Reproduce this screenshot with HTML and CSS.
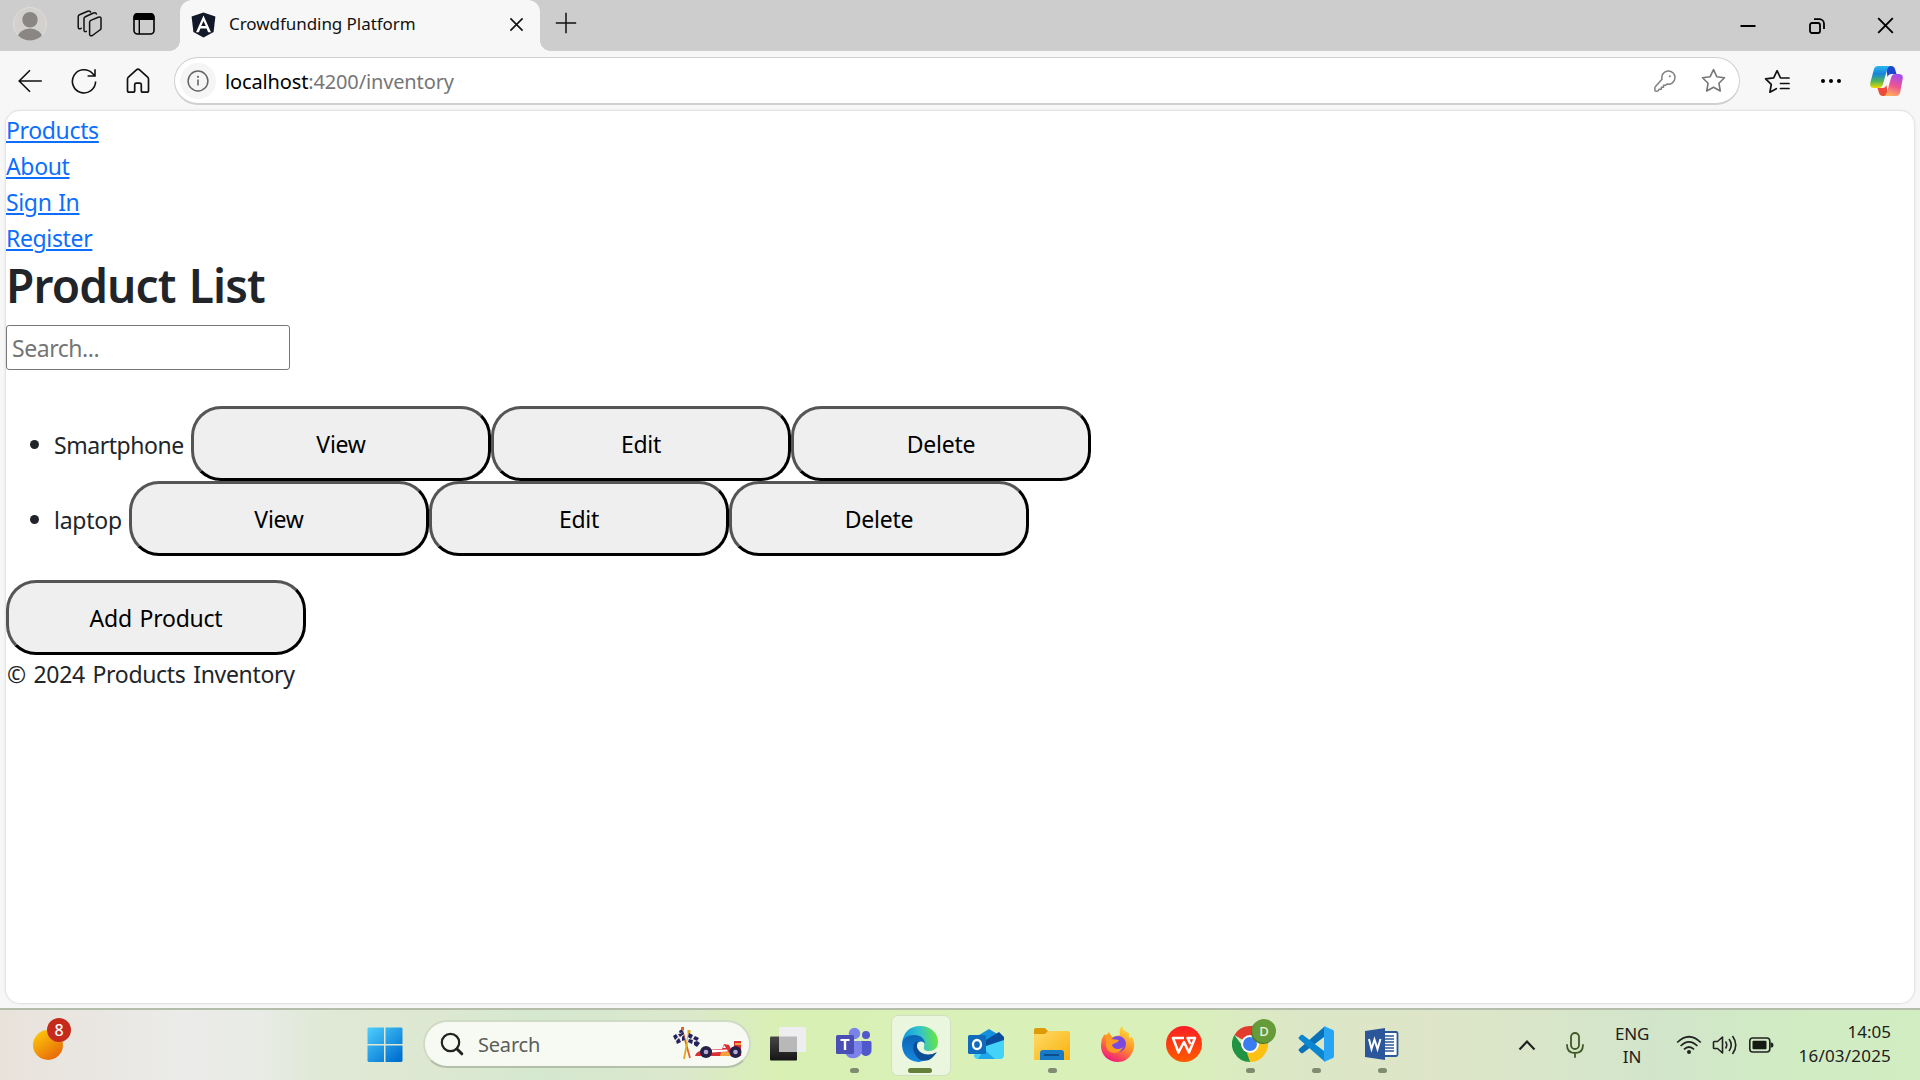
FILE: index.html
```html
<!DOCTYPE html>
<html lang="en">
<head>
<meta charset="utf-8">
<title>Crowdfunding Platform</title>
<link rel="stylesheet" href="styles.css">
</head>
<body>
<div class="desktop">
  <header class="tabbar">
    <div class="tabtool profile">
      <svg width="36" height="36" viewBox="0 0 36 36"><defs><clipPath id="face"><circle cx="18" cy="18" r="16.5"/></clipPath></defs><circle cx="18" cy="18" r="16.5" fill="#d3d1ce" stroke="#dfdedb"/><g clip-path="url(#face)" fill="#8a8683"><circle cx="18" cy="13.7" r="7.7"/><ellipse cx="18" cy="32.5" rx="12.5" ry="10"/></g></svg>
    </div>
    <div class="tabtool">
      <svg width="28" height="28" viewBox="0 0 28 28" fill="none" stroke="#111" stroke-width="1.5" stroke-linejoin="round" stroke-linecap="round"><path d="M13.6 12.2q0-1.300 1.200-1.800l7.400-3.200q2.800-.8 2.800 1.600v9.400q0 1.300-1.200 1.800l-7.400 5.500q-2.800 1.200-2.800-1.600z"/><path d="M10.300 21.400q-2.300 1-2.300-1.600V8.800q0-1.500 1.300-2L17.500 3q2.200-.8 2.900.9M5.200 18.400q-3 1.400-3-1.400V6.800q0-1.500 1.300-2l8.200-3.600q2.200-.8 2.900.9"/></svg>
    </div>
    <div class="tabtool narrow">
      <svg width="24" height="24" viewBox="0 0 24 24"><rect x="2" y="2" width="20" height="20" rx="3.5" fill="none" stroke="#000" stroke-width="1.6"/><path d="M1.5 8V5a4 4 0 0 1 4-4h13a4 4 0 0 1 4 4v3z"/><path d="M7.3 8v14" stroke="#000" stroke-width="1.4"/></svg>
    </div>
    <div class="tab">
      <svg class="favicon" width="25" height="26" viewBox="0 0 25 26"><path fill="#111827" d="M12.5.5 24.4 4.6 22.6 20 12.5 25.6 2.4 20 .6 4.6z"/><path fill="#fff" fill-rule="evenodd" d="M12.5 3.6 5 20.2h2.9l1.5-3.7h6.2l1.5 3.7H20zm0 5.500 2.300 5h-4.600z"/></svg>
      <span class="tab-title">Crowdfunding Platform</span>
      <svg width="15" height="15" viewBox="0 0 15 15" stroke="#111" stroke-width="1.6"><path d="m1.4 1.4 12.2 12.2M13.6 1.4 1.4 13.6"/></svg>
    </div>
    <div class="newtab"><svg width="22" height="22" viewBox="0 0 22 22" stroke="#111" stroke-width="1.5"><path d="M11 .8v20.4M.8 11h20.4"/></svg></div>
    <div class="window-controls">
      <span><svg width="16" height="16" viewBox="0 0 16 16" stroke="#000" stroke-width="2"><path d="M.5 8h15"/></svg></span>
      <span><svg width="16" height="16" viewBox="0 0 16 16" fill="none" stroke="#000" stroke-width="1.8"><rect x="1" y="5" width="10" height="10" rx="2"/><path d="M5 1.2h5.5A4.5 4.5 0 0 1 15 5.7V11"/></svg></span>
      <span><svg width="17" height="17" viewBox="0 0 17 17" stroke="#000" stroke-width="1.9"><path d="m1.2 1.2 14.6 14.6M15.8 1.2 1.2 15.8"/></svg></span>
    </div>
  </header>

  <div class="toolbar">
    <span class="nav"><svg width="24" height="24" viewBox="0 0 24 24" fill="none" stroke="#111" stroke-width="1.6"><path d="M23.8 12H1.2M12 1.2 1.2 12 12 22.8"/></svg></span>
    <span class="nav"><svg width="26" height="26" viewBox="0 0 26 26" fill="none" stroke="#111" stroke-width="1.6"><path d="M24.6 13.5A11.6 11.6 0 1 1 21.3 5.2L24 8M24 1.2V8h-7.4"/></svg></span>
    <span class="nav"><svg width="24" height="26" viewBox="0 0 24 26" fill="none" stroke="#111" stroke-width="1.7" stroke-linejoin="round"><path d="M1.5 11.2q0-1.2.9-2l8-7.3q1.6-1.4 3.2 0l8 7.3q.9.8.9 2v11.2q0 1.8-1.8 1.8H17q-1.7 0-1.7-1.8v-5.6q0-1.6-1.6-1.6h-3.4q-1.6 0-1.6 1.6v5.6q0 1.8-1.7 1.8H3.3q-1.8 0-1.8-1.8z"/></svg></span>
    <div class="omnibox">
      <span class="site-info"><svg width="22" height="22" viewBox="0 0 22 22"><circle cx="11" cy="11" r="9.9" fill="none" stroke="#666" stroke-width="1.5"/><path d="M11 9.6v6" stroke="#666" stroke-width="1.6"/><circle cx="11" cy="6.8" r="1.1" fill="#666"/></svg></span>
      <span class="url"><b>localhost</b>:4200/inventory</span>
      <span class="field-icon"><svg width="22" height="22" viewBox="0 0 22 22" fill="none" stroke="#808080" stroke-width="1.5" stroke-linejoin="round"><path d="M8 9.2A6.6 6.6 0 1 1 13 14l-1.6 1.3H9.5v2H7.4v2H5.2L4 20.8q-.5.5-1.3.4l-1-.1q-.7-.1-.8-.8v-2.6q0-.6.4-1z"/><circle cx="15.8" cy="6.2" r="1" fill="#808080" stroke="none"/></svg></span>
      <span class="field-icon"><svg width="25" height="25" viewBox="0 0 25 25" fill="none" stroke="#767676" stroke-width="1.6" stroke-linejoin="round"><path d="m12.5 1.6 3.3 7.1 7.7 1-5.6 5.5 1.4 7.8-6.8-3.7-6.8 3.7 1.4-7.8L1.5 9.700l7.700-1z"/></svg></span>
    </div>
    <span class="nav first"><svg width="26" height="25" viewBox="0 0 26 25" fill="none" stroke="#111" stroke-width="1.7" stroke-linejoin="round" stroke-linecap="round"><path d="M25 9h-8.500l-3.400-7.300L9.700 8.900 1.600 9.800l5.700 5.500-1.400 7.900 6.400-3.500M16.500 14.500H25M16.500 19.500H25"/></svg></span>
    <span class="nav"><svg width="22" height="6" viewBox="0 0 22 6"><circle cx="3" cy="3" r="2"/><circle cx="11" cy="3" r="2"/><circle cx="19" cy="3" r="2"/></svg></span>
    <span class="nav copilot"><svg width="34" height="32" viewBox="0 0 34 32"><defs><linearGradient id="cpa" x1="0" y1="0" x2="0" y2="1"><stop offset="0" stop-color="#2cb8ee"/><stop offset=".35" stop-color="#1685dc"/><stop offset=".7" stop-color="#54b655"/><stop offset="1" stop-color="#f4d900"/></linearGradient><linearGradient id="cpb" x1=".6" y1="0" x2=".3" y2="1"><stop offset="0" stop-color="#a44df0"/><stop offset=".5" stop-color="#ee5392"/><stop offset="1" stop-color="#ffb158"/></linearGradient></defs><path fill="#1b46cd" d="M16 1h5q3 0 4 3l1.500 5h-5q-3 0-4 3z"/><path fill="#ee4a3a" d="M18 31h-5q-3 0-4-3l-1.500-5h5q3 0 4-3z"/><path fill="url(#cpa)" d="M8 1h12q-2 1-3 4l-4 14q-1 4-4 4H4q-5 0-3.500-6L4 4q1-3 4-3z"/><path fill="url(#cpb)" d="M26 31H14q2-1 3-4l4-14q1-4 4-4h4q5 0 3.500 6L30 28q-1 3-4 3z"/></svg></span>
  </div>

  <div class="viewport">
    <nav class="links">
      <a href="#">Products</a>
      <a href="#">About</a>
      <a href="#">Sign In</a>
      <a href="#">Register</a>
    </nav>
    <h1>Product List</h1>
    <input class="search-input" type="text" placeholder="Search...">
    <ul class="products">
      <li><span class="name phone">Smartphone</span><button>View</button><button>Edit</button><button>Delete</button></li>
      <li><span class="name laptop">laptop</span><button>View</button><button>Edit</button><button>Delete</button></li>
    </ul>
    <button class="add">Add Product</button>
    <footer>© 2024 Products Inventory</footer>
  </div>

  <div class="taskbar">
    <div class="widgets"><span class="sun"><i class="badge">8</i></span></div>
    <svg class="start" width="36" height="36" viewBox="0 0 36 36"><defs><linearGradient id="win" gradientUnits="userSpaceOnUse" x1="0" y1="0" x2="30" y2="34"><stop offset="0" stop-color="#4fd0ff"/><stop offset="1" stop-color="#0070d0"/></linearGradient></defs><path fill="url(#win)" d="M1.500.5H17v16.500H.5V1.500zM18.500.5H34.500l1 1V17h-17zM.5 18.500H17V35H1.500l-1-1zM18.500 18.500h17V34l-1 1h-16z"/></svg>
    <div class="search-pill">
      <svg width="24" height="24" viewBox="0 0 24 24" fill="none" stroke="#222" stroke-linecap="round"><circle cx="10.500" cy="10.500" r="8.700" stroke-width="2.200"/><path d="m17 17 4.800 4.800" stroke-width="3"/></svg>
      <span class="pill-text">Search</span>
      <svg class="race" width="70" height="34" viewBox="0 0 70 34"><path d="m10 2 8 29" stroke="#e9622c" stroke-width="1.800"/><path d="M17 5 12 32" stroke="#e3a91c" stroke-width="1.800"/><path fill="#eee" d="M10 2 1 9l3 8 9-4zM17 6l12 6-4 8-10-5z"/><path fill="#26225c" d="m7 4 3-2 1 3-3 2zM1 9l3-2 2 3-3 3zM6 7l2 3 4-3-1-2zM4 14l3-3 2 4-4 2zM10 10l2-2 1 5-3 1zM17 6l4 2-2 4-3-2zM23 9l4 2-2 3-4-2zM17 12l4 1-1 4-4-2zM22 15l3-1 3 2-3 4-3-2z"/><path fill="#e9622c" d="M9 0h3v3H9z"/><path fill="#e3a91c" d="M15.500 3h3v3h-3z"/><path fill="#dd2e33" d="M23 29q1-5 9-6l18-1 2-5 5 1 2 4 3-1V14h7v15z"/><path fill="#f4a13b" d="M49 25h8l2 4H48zM63 16h6v2h-6z"/><path fill="#fff" d="m40 23 15-.5 1 2-16 1zM52 18l2 3h-3z"/><path fill="#fff" d="M62 12.500h7V14h-7z"/><g fill="#27204a"><circle cx="34" cy="25" r="6"/><circle cx="63.500" cy="25" r="6"/></g><g fill="#b5aed2"><circle cx="34" cy="25" r="2.300"/><circle cx="63.500" cy="25" r="2.300"/></g></svg>
    </div>
    <div class="apps">
      <span class="app"><svg width="36" height="36" viewBox="0 0 36 36"><defs><linearGradient id="tv" x1="0" y1="0" x2="0" y2="1"><stop offset="0" stop-color="#474747"/><stop offset="1" stop-color="#151515"/></linearGradient></defs><rect y="10.500" width="27" height="24" rx="1" fill="url(#tv)"/><rect x="9" y="1" width="27" height="25" rx="1" fill="#eeeef0"/><path fill="#b8b8b8" d="M9 10.500h18V26H9z"/></svg></span>
      <span class="app open"><svg width="36" height="36" viewBox="0 0 36 36"><circle cx="30" cy="9" r="4" fill="#5059c9"/><path fill="#5059c9" d="M25 15h9q1.500 0 1.500 1.500V24a5.500 5.500 0 0 1-11 1z"/><circle cx="18.500" cy="7.500" r="5.700" fill="#7b83eb"/><path fill="#7b83eb" d="M9 15h15q2 0 2 2v8a9 9 0 0 1-17 2z"/><rect y="9" width="18" height="19" rx="1.500" fill="#4a4fb5"/><path fill="#fff" d="M4.500 13h9v2h-3.300v9H7.800v-9H4.500z"/></svg></span>
      <span class="app active"><svg width="38" height="38" viewBox="0 0 38 38"><defs><linearGradient id="eg" x1="0" y1=".5" x2="1" y2=".4"><stop offset="0" stop-color="#1193dd"/><stop offset=".5" stop-color="#32c3ce"/><stop offset="1" stop-color="#69e83c"/></linearGradient><linearGradient id="eb" x1="0" y1="0" x2="0" y2="1"><stop offset="0" stop-color="#0c63b5"/><stop offset="1" stop-color="#1389df"/></linearGradient></defs><path fill="url(#eg)" d="M1 19C2 7 9 1 19 1c11 0 18 7 18 16 0 6-4 9-9 9-4 0-6-2-5-4 1-3 0-7-6-9-7-2-14 1-16 6z"/><path fill="url(#eb)" d="M1 19c1-6 6-9 12-9 7 0 11 4 11 9-1-3-7-4-8 1-2 7 4 12 13 10-4 5-8 7-12 7C6 36 1 28 1 19z"/><path fill="#0d4f97" d="M16 16c-4 2-5 8-2 13 4 8 12 9 18 3 2-2 3-4 4-5-9 5-18 2-20-5z"/></svg></span>
      <span class="app"><svg width="36" height="36" viewBox="0 0 36 36"><path fill="#1490df" d="m6 12 15-9 15 9v8H6z"/><path fill="#0b4d9c" d="m13 17 18-11 5 5v4L16 28z"/><path fill="#43d2f8" d="m12 22 24-8v15q0 4-4 4H10q-4 0-4-4z"/><path fill="#20a8ea" d="M14 27 18 25 27 33H10z"/><rect y="9" width="18" height="19" rx="1.500" fill="#0f6cbd"/><ellipse cx="9" cy="18.500" rx="4" ry="4.500" fill="none" stroke="#fff" stroke-width="2.300"/></svg></span>
      <span class="app open"><svg width="36" height="36" viewBox="0 0 36 36"><defs><linearGradient id="fo" x1="0" y1="0" x2="1" y2="1"><stop offset="0" stop-color="#ffdb68"/><stop offset="1" stop-color="#f8b10d"/></linearGradient></defs><path fill="#dd9b08" d="M0 8V4q0-2 2-2h9l4 4h19v4H0z"/><path fill="url(#fo)" d="M0 8h11l3-3h20q2 0 2 2v27H0z"/><path fill="#167ac6" d="M6 34v-7q0-3 3-3h18q3 0 3 3v7z"/><path stroke="#0b4e8b" stroke-width="2" d="M10 29h15"/></svg></span>
      <span class="app"><svg width="36" height="36" viewBox="0 0 36 36"><defs><linearGradient id="ff" x1=".8" y1="0" x2=".3" y2="1"><stop offset="0" stop-color="#ffe83f"/><stop offset=".5" stop-color="#ff8f27"/><stop offset="1" stop-color="#f01580"/></linearGradient></defs><path fill="url(#ff)" d="M22 0c1 4 4 6 7 7v5l3-1c3 5 3 11 0 16-3 6-8 9-14 9C8 36 1 29 1 20c0-5 1-9 4-12l1 2 3-4 3 5 8-2c-1-4 0-7 2-9z"/><circle cx="18" cy="18" r="8" fill="#7a4ae0"/><path fill="#ff9b20" d="m6 8 6 5 7 1c-2 4-6 3-7 5 1 5 8 5 11 2-3 8-15 8-17-1z"/></svg></span>
      <span class="app"><svg width="36" height="36" viewBox="0 0 36 36"><defs><linearGradient id="wp" x1="0" y1="0" x2="0" y2="1"><stop offset="0" stop-color="#fb1f24"/><stop offset="1" stop-color="#ff5a00"/></linearGradient></defs><circle cx="18" cy="18" r="18" fill="url(#wp)"/><path fill="none" stroke="#fff" stroke-width="2.500" stroke-linejoin="round" d="M18 12H7l5.500 14.500L18 16l5 10.500L29 12h-7.500l3 6"/></svg></span>
      <span class="app open"><svg width="36" height="36" viewBox="0 0 36 36"><path fill="#e33b2e" d="M18 18 2.400 9A18 18 0 0 1 33.600 9z"/><path fill="#fdc114" d="M18 18 33.600 9A18 18 0 0 1 18 36z"/><path fill="#229342" d="M18 18v18A18 18 0 0 1 2.400 9L12 22z"/><path fill="#fdc114" d="M25.500 22 18 36l-3-9z"/><path fill="#e33b2e" d="M18 9h15.600L26 17z"/><circle cx="18" cy="18" r="9" fill="#fff"/><circle cx="18" cy="18" r="7" fill="#3b7df0"/></svg><i class="profile-dot">D</i></span>
      <span class="app open"><svg width="36" height="36" viewBox="0 0 36 36"><path fill="#0a70b8" d="m26 1-25 22q-1 1 0 2l2 2q1 .500 2 0l21-16z"/><path fill="#0d86d1" d="m26 35L1 13q-1-1 0-2l2-2q1-.500 2 0l21 16z"/><path fill="#27a5f4" d="m26 0 9 4q1 .500 1 2v24q0 1.500-1 2l-9 4z"/></svg></span>
      <span class="app open"><svg width="34" height="34" viewBox="0 0 34 34"><path fill="#fff" stroke="#2b579a" stroke-width="1.800" d="M17 5h14q1.500 0 1.500 1.500v21q0 1.500-1.500 1.500H17z"/><path stroke="#2b579a" stroke-width="1.500" d="M18 9h11M18 12h11M18 15h11M18 18h11M18 21h11M18 24h11"/><path fill="#2b579a" d="m0 4 20-3v32L0 30z"/><path fill="none" stroke="#fff" stroke-width="2" d="m4 12 2.500 10L9.500 12.500 12.500 22 15.500 12"/></svg></span>
    </div>
    <div class="tray">
      <span class="tray-cell"><svg width="18" height="12" viewBox="0 0 18 12" fill="none" stroke="#222" stroke-width="2.200"><path d="m1.500 10.500 7.500-8 7.500 8"/></svg></span>
      <span class="tray-cell"><svg width="18" height="26" viewBox="0 0 18 26" fill="none" stroke="#3f5a28" stroke-width="1.800" stroke-linecap="round"><rect x="5" y="1" width="8" height="16" rx="4"/><path d="M1 13q0 8 8 8t8-8M9 21v4"/></svg></span>
      <span class="lang"><span>ENG</span><span>IN</span></span>
      <span class="status"><svg width="26" height="20" viewBox="0 0 26 20" fill="none" stroke="#222" stroke-width="1.700"><path d="M1.200 7.500Q13-4 24.800 7.500M4.600 11q8.400-8.200 16.800 0M8 14.400q5-4.800 10 0"/><circle cx="13" cy="17" r="2" fill="#222" stroke="none"/></svg></span>
      <span class="status"><svg width="26" height="20" viewBox="0 0 26 20" fill="none" stroke="#222" stroke-width="1.600"><path stroke-linejoin="round" d="M1.500 7.200v5.600q0 .700.700.700H5.500l5 4.500V2L5.500 6.500H2.200q-.700 0-.700.700z"/><path d="M13.500 6.500q2.500 3.500 0 7M17 4q4.500 6 0 12M20.500 1q6.500 9 0 18"/></svg></span>
      <span class="status"><svg width="26" height="16" viewBox="0 0 26 16"><rect x="1.800" y="1" width="20" height="14" rx="3" fill="none" stroke="#222" stroke-width="1.600"/><rect x="4.500" y="3.700" width="14" height="8.600" rx="1" fill="#151a12"/><path fill="#222" d="M22.500 5.500h1q2 0 2 2.500t-2 2.500h-1z"/></svg></span>
      <span class="clock"><span class="time">14:05</span><span>16/03/2025</span></span>
    </div>
  </div>
</div>
</body>
</html>
```
FILE: styles.css
```css
* { box-sizing: border-box; }
body { margin: 0; font-family: "Noto Sans", "Open Sans", sans-serif; }
svg { display: block; flex: none; }
.desktop { width: 1920px; height: 1080px; overflow: hidden; display: flex; flex-direction: column; background: #f7f7f7; }

.tabbar { height: 51px; flex: none; display: flex; background: #cdcdcd; }
.tabtool { width: 60px; height: 48px; display: flex; align-items: center; justify-content: center; }
.tabtool.narrow { width: 48px; margin-right: 12px; }
.tab { position: relative; width: 360px; height: 51px; padding: 0 16px 2px 11px; display: flex; align-items: center; background: #f7f7f7; border-radius: 12px 12px 0 0; }
.tab::before, .tab::after { content: ""; position: absolute; bottom: 0; width: 10px; height: 10px; }
.tab::before { left: -10px; background: radial-gradient(circle at 0 0, #cdcdcd 9.5px, #f7f7f7 10px); }
.tab::after { right: -10px; background: radial-gradient(circle at 100% 0, #cdcdcd 9.5px, #f7f7f7 10px); }
.tab-title { flex: 1; margin-left: 13px; padding-bottom: 2px; font-size: 17px; letter-spacing: -0.05px; color: #111; white-space: nowrap; }
.newtab { width: 52px; height: 46px; display: flex; align-items: center; justify-content: center; }
.window-controls { margin-left: auto; display: flex; height: 51px; }
.window-controls span { width: 69px; display: flex; align-items: center; justify-content: center; }

.toolbar { height: 60px; flex: none; display: flex; align-items: center; padding: 0 5px 0 3px; }
.nav { width: 54px; display: flex; align-items: center; justify-content: center; }
.nav.first { margin-left: 9px; width: 55px; }
.nav.copilot { width: 57px; }
.omnibox { flex: 1; height: 48px; margin-left: 9px; padding: 0 2px 0 5px; display: flex; align-items: center; background: #fff; border: 1px solid #d0d0d0; border-bottom-width: 2px; border-radius: 24px; }
.site-info { width: 36px; height: 36px; border-radius: 50%; background: #f5f5f5; display: flex; align-items: center; justify-content: center; }
.url { flex: 1; margin-left: 9px; padding-top: 1px; font-size: 20px; letter-spacing: -0.14px; color: #767676; }
.url b { font-weight: 400; color: #000; }
.field-icon { width: 48px; display: flex; justify-content: center; }

.viewport { height: 892px; flex: none; margin: 0 6px; padding-top: 1px; background: #fff; border-radius: 14px; box-shadow: 0 0 2px 1px #dedede; color: #212529; font-size: 23px; letter-spacing: -0.35px; word-spacing: 1px; line-height: 36px; }
.links { display: flex; flex-direction: column; align-items: flex-start; }
.links a { color: #0d6efd; text-decoration: underline; text-decoration-thickness: 2px; text-underline-offset: 2px; }
h1 { margin: 0; padding: 1px 0 11px; font-size: 46px; font-weight: 600; line-height: 57px; letter-spacing: -0.85px; word-spacing: 2px; }
.search-input { display: block; width: 284px; height: 45px; padding: 2px 5px; border: 1px solid #767676; border-radius: 3px; font: inherit; letter-spacing: -0.45px; }
.search-input::placeholder { color: #757575; }
.products { list-style: none; margin: 36px 0 24px; padding: 0 0 0 24px; }
.products li { display: flex; align-items: center; height: 75px; }
.products li::before { content: ""; width: 9px; height: 9px; margin: 2px 14px 0 0; border-radius: 50%; background: #212529; }
.name { padding: 2px 0 0 1px; letter-spacing: -0.45px; }
.phone { width: 138px; }
.laptop { width: 76px; letter-spacing: -0.25px; }
button { display: block; width: 300px; height: 75px; padding: 0; border: 3px solid; border-color: #555 #000 #000 #555; border-radius: 30px; background: #efefef; color: #000; font: inherit; letter-spacing: -0.25px; word-spacing: 2px; }
footer { padding: 1px 0 0 1px; letter-spacing: -0.32px; word-spacing: 2px; }

.taskbar { height: 72px; margin-top: auto; flex: none; display: flex; align-items: center; border-top: 2px solid #b4bcaa; background: linear-gradient(90deg, #e8e2da 0, #ebebe9 180px, #e9ebe6 260px, #dfe9d6 320px, #dde8d2 430px, #d5e8d0 540px, #dbe8cc 680px, #d9f0b4 780px, #d9f0bb 1180px, #dbe7c6 1290px, #dee5c8 1430px, #dae6c9 1520px, #d2e5cb 1650px, #d1ecc3 1800px, #d1edc2 1920px); }
.widgets { width: 367px; padding-left: 33px; }
.sun { position: relative; display: block; width: 30px; height: 30px; border-radius: 50%; background: linear-gradient(145deg, #ffd20c, #e45a06); }
.badge { position: absolute; left: 14px; top: -12px; width: 24px; height: 24px; border-radius: 50%; background: #c42b1c; color: #fff; font: 500 16px/24px "Noto Sans", sans-serif; text-align: center; }
.search-pill { width: 328px; height: 48px; margin: 0 4px 2px 20px; padding: 0 7px 0 15px; display: flex; align-items: center; border: 2px solid #d0dbc6; border-bottom-color: #b3bfa9; border-radius: 24px; background: #f6faf3; }
.pill-text { flex: 1; margin-left: 14px; font-size: 20px; color: #5b5e58; letter-spacing: -0.2px; }
.apps { display: flex; height: 70px; }
.app { position: relative; width: 66px; height: 68px; display: flex; align-items: center; justify-content: center; }
.app.open::after, .app.active::after { content: ""; position: absolute; left: 50%; bottom: 5px; width: 9px; height: 5px; margin-left: -4px; border-radius: 3px; background: #7f8c70; }
.app.active::before { content: ""; position: absolute; left: 4px; top: 5px; width: 58px; height: 59px; border: 1px solid #d3dfc3; border-radius: 7px; background: #ebf6df; }
.app.active::after { width: 24px; margin-left: -12px; background: #65803b; }
.app svg { position: relative; }
.profile-dot { position: absolute; left: 35px; top: 9px; width: 24px; height: 24px; border-radius: 50%; background: #659b38; box-shadow: -1px 1px 0 #4a7629; color: #e9f3df; font: 500 13px/24px "Noto Sans", sans-serif; text-align: center; }
.tray { margin-left: auto; padding-right: 29px; display: flex; align-items: center; height: 68px; color: #1d211a; font-size: 17px; line-height: 23px; letter-spacing: -0.2px; }
.tray-cell { width: 48px; display: flex; justify-content: center; }
.lang { width: 66px; display: flex; flex-direction: column; align-items: center; }
.status { width: 36px; display: flex; justify-content: center; }
.lang + .status { margin-left: 6px; }
.clock { width: 112px; display: flex; flex-direction: column; align-items: flex-end; margin-top: -2px; line-height: 24px; letter-spacing: 0.2px; }
.time { letter-spacing: 0; }
```
